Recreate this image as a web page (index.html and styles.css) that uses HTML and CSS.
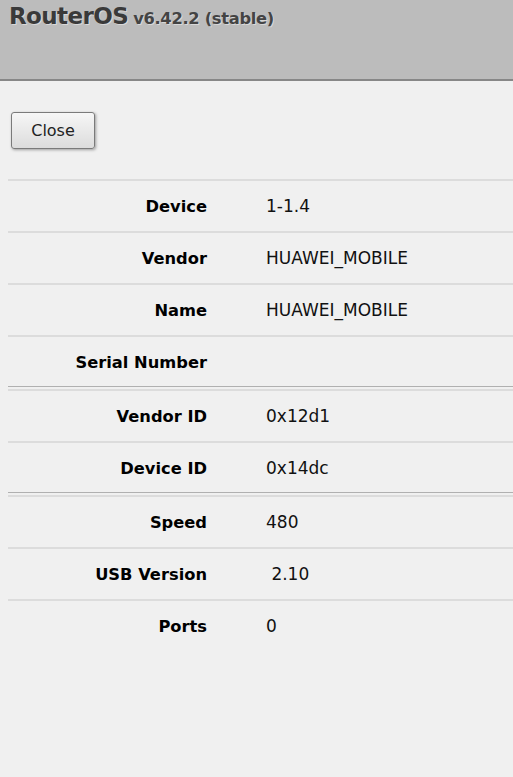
FILE: index.html
```html
<!DOCTYPE html>
<html lang="en">
<head>
  <meta charset="UTF-8" />
  <meta name="viewport" content="width=device-width, initial-scale=1.0"/>
  <title>RouterOS - USB</title>
  <link rel="stylesheet" href="styles.css">
</head>
<body>

  <div class="header">
    <h1 class="title">RouterOS<span class="version">v6.42.2 (stable)</span></h1>
  </div>

  <div class="content">
    <div class="toolbar">
      <button class="btn">Close</button>
    </div>

    <div class="props">
      <div class="row"><div class="label">Device</div><div class="value">1-1.4</div></div>
      <div class="row"><div class="label">Vendor</div><div class="value">HUAWEI_MOBILE</div></div>
      <div class="row"><div class="label">Name</div><div class="value">HUAWEI_MOBILE</div></div>
      <div class="row"><div class="label">Serial Number</div><div class="value"></div></div>
      <div class="sep"></div>
      <div class="row"><div class="label">Vendor ID</div><div class="value">0x12d1</div></div>
      <div class="row"><div class="label">Device ID</div><div class="value">0x14dc</div></div>
      <div class="sep"></div>
      <div class="row"><div class="label">Speed</div><div class="value">480</div></div>
      <div class="row"><div class="label">USB Version</div><div class="value">&nbsp;2.10</div></div>
      <div class="row"><div class="label">Ports</div><div class="value">0</div></div>
    </div>
  </div>

</body>
</html>
```

FILE: styles.css
```css
body {
  margin: 0;
  background: #f0f0f0;
  font-family: "DejaVu Sans", Verdana, sans-serif;
  color: #000;
}

.header {
  background: #bcbcbc;
  height: 79px;
  border-bottom: 2px solid #878787;
}

.title {
  margin: 0;
  padding: 3px 0 0 9px;
  font-size: 23px;
  font-weight: bold;
  color: #3a3a3a;
  text-shadow: 1px 1px 0 #d8d8d8;
  letter-spacing: -0.6px;
}

.version {
  margin-left: 5px;
  font-size: 16.3px;
  letter-spacing: -0.3px;
  color: #444;
}

.content {
  padding: 31px 0 0 8px;
}

.toolbar {
  padding-left: 3px;
  height: 67px;
}

.btn {
  width: 84px;
  height: 37px;
  font-family: inherit;
  font-size: 16px;
  color: #222;
  border: 1px solid #7a7a7a;
  border-radius: 3px;
  background: linear-gradient(#f6f6f6, #dcdcdc);
  box-shadow: 1px 1px 3px rgba(0, 0, 0, 0.35);
  cursor: pointer;
}

.row {
  display: flex;
  align-items: center;
  height: 50px;
  border-top: 2px solid #dcdcdc;
}

.label {
  width: 199px;
  text-align: right;
  font-weight: bold;
  font-size: 16.3px;
}

.value {
  padding-left: 59px;
  font-size: 17px;
  color: #111;
  white-space: pre;
}

.sep {
  height: 2px;
  margin-top: -1px;
  border-top: 1px solid #b0b0b0;
}
```
